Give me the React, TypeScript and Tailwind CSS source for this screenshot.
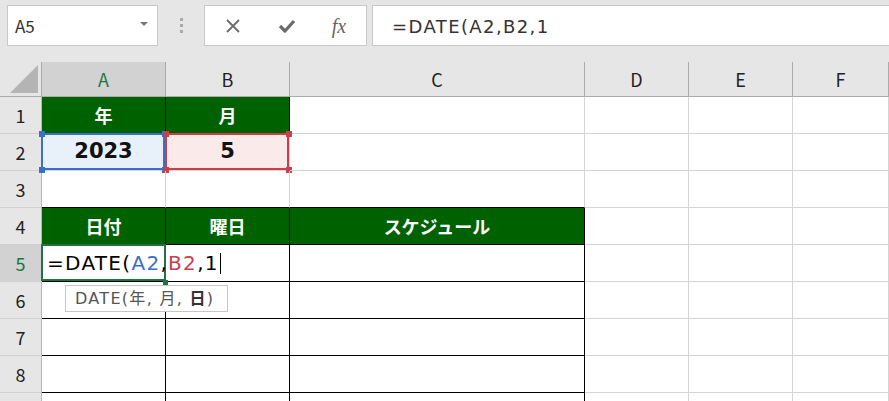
import type { ReactNode } from 'react';

const FONT = { fontFamily: '"Noto Sans CJK JP", "Noto Sans", sans-serif' };
const WIDE = { fontFamily: '"DejaVu Sans", "Noto Sans CJK JP", sans-serif' };

const COLS = ['A', 'B', 'C', 'D', 'E', 'F'];
const GRID = 'grid grid-cols-[42px_124px_124px_295px_104px_104px_1fr]';

function Cell({ className = '', children }: { className?: string; children?: ReactNode }) {
  return (
    <div className={`relative flex h-[37px] items-center justify-center border-b border-r border-[#d4d4d4] ${className}`}>
      {children}
    </div>
  );
}

function RowHead({ n, active }: { n?: number; active?: boolean }) {
  return (
    <div
      className={`flex h-[37px] items-center justify-center border-b border-r border-b-[#d0d0d0] border-r-[#b8b8b8] text-[18px] ${
        active ? 'bg-[#d2d2d2] text-[#217346]' : 'bg-[#e6e6e6] text-[#222]'
      }`}
    >
      {n}
    </div>
  );
}

function Handles({ color }: { color: string }) {
  const sq = `absolute h-[6px] w-[6px] ${color}`;
  return (
    <>
      <span className={`${sq} -left-[3px] -top-[3px]`} />
      <span className={`${sq} -right-[3px] -top-[3px]`} />
      <span className={`${sq} -bottom-[3px] -left-[3px]`} />
      <span className={`${sq} -bottom-[3px] -right-[3px]`} />
    </>
  );
}

const greenHead = 'bg-[#006100] text-white font-bold text-[18px] border-r-black border-b-black';
const tableCell = 'border-r-black border-b-black';

export default function App() {
  return (
    <div className="h-[401px] w-[889px] overflow-hidden bg-white" style={FONT}>
      {/* formula bar */}
      <div className="flex h-[62px] items-start bg-[#e6e6e6] pl-[7px] pt-[5px]">
        <div className="flex h-[41px] w-[151px] items-center justify-between border border-[#c8c8c8] bg-white pl-[7px] pr-[9px] text-[17px] text-[#333]">
          <span>A5</span>
          <span className="mb-[4px] h-0 w-0 border-x-[4px] border-t-[4px] border-x-transparent border-t-[#777]" />
        </div>
        <div className="flex h-[41px] w-[46px] flex-col items-center justify-center gap-[3px]">
          <span className="h-[3px] w-[3px] bg-[#aaa]" />
          <span className="h-[3px] w-[3px] bg-[#aaa]" />
          <span className="h-[3px] w-[3px] bg-[#aaa]" />
        </div>
        <div className="flex h-[41px] w-[163px] items-center border border-[#c8c8c8] bg-white">
          <div className="flex w-[56px] justify-center">
            <svg width="16" height="16" viewBox="0 0 16 16" fill="none" stroke="#6a6a6a" strokeWidth="1.8">
              <path d="M2 2 L14 14 M14 2 L2 14" />
            </svg>
          </div>
          <div className="flex w-[52px] justify-center">
            <svg width="18" height="16" viewBox="0 0 18 16" fill="none" stroke="#6a6a6a" strokeWidth="3.2" strokeLinejoin="round">
              <path d="M2 8 L7 13 L16 3" />
            </svg>
          </div>
          <div className="flex w-[52px] justify-center text-[20px] italic text-[#666]" style={{ fontFamily: '"Liberation Serif", serif' }}>
            fx
          </div>
        </div>
        <div
          className="ml-[5px] flex h-[41px] flex-1 items-center border border-r-0 border-[#c8c8c8] bg-white pl-[19px] pt-[2px] text-[18px] tracking-[1.4px] text-[#333]"
          style={WIDE}
        >
          =DATE(A2,B2,1
        </div>
      </div>

      {/* column headers */}
      <div className={`${GRID} h-[35px]`}>
        <div className="relative border-b border-r border-[#ababab] bg-[#e6e6e6]">
          <svg className="absolute bottom-[3px] right-[3px]" width="28" height="28" viewBox="0 0 28 28">
            <path d="M28 0 L28 28 L0 28 Z" fill="#b4b4b4" />
          </svg>
        </div>
        {COLS.map((c) => (
          <div
            key={c}
            className={`flex items-center justify-center border-b border-r border-[#ababab] text-[18px] ${
              c === 'A' ? 'bg-[#d2d2d2] text-[#217346]' : 'bg-[#e6e6e6] text-[#222]'
            }`}
          >
            {c}
          </div>
        ))}
      </div>

      {/* rows */}
      <div className={GRID}>
        {/* 1 */}
        <RowHead n={1} />
        <Cell className={greenHead}>年</Cell>
        <Cell className={greenHead}>月</Cell>
        <Cell />
        <Cell />
        <Cell />
        <Cell />

        {/* 2 */}
        <RowHead n={2} />
        <Cell className="bg-[#e8f0fa] text-[21px] font-bold text-[#111]">
          <span className="pointer-events-none absolute -left-px -top-px bottom-0 right-0 border-2 border-[#3a70c8]" />
          <Handles color="bg-[#3a70c8]" />
          <span style={WIDE}>2023</span>
        </Cell>
        <Cell className="bg-[#fbeaea] text-[21px] font-bold text-[#111]">
          <span className="pointer-events-none absolute -left-px -top-px bottom-0 right-0 border-2 border-[#c8404c]" />
          <Handles color="bg-[#c8404c]" />
          <span style={WIDE}>5</span>
        </Cell>
        <Cell />
        <Cell />
        <Cell />
        <Cell />

        {/* 3 */}
        <RowHead n={3} />
        <Cell className="border-b-black" />
        <Cell className="border-b-black" />
        <Cell className="border-b-black" />
        <Cell />
        <Cell />
        <Cell />

        {/* 4 */}
        <RowHead n={4} />
        <Cell className={greenHead}>日付</Cell>
        <Cell className={greenHead}>曜日</Cell>
        <Cell className={greenHead}>スケジュール</Cell>
        <Cell />
        <Cell />
        <Cell />

        {/* 5 */}
        <RowHead n={5} active />
        <Cell className={`${tableCell} justify-start`}>
          <span className="pointer-events-none absolute -left-px -top-px bottom-0 right-[-1px] border-2 border-[#217346]" />
          <span className="relative z-10 ml-[5px] whitespace-nowrap text-[20px] tracking-[1.3px] text-black" style={WIDE}>
            =DATE(<span className="text-[#3a70c8]">A2</span>,<span className="text-[#c8404c]">B2</span>,1
            <span className="ml-[1px] inline-block h-[21px] w-px translate-y-[4px] bg-black" />
          </span>
          <span className="absolute -bottom-[4px] -right-[3px] z-10 h-[5px] w-[5px] bg-[#217346]" />
          <div className="absolute left-[23px] top-[40px] z-20 flex h-[27px] w-[163px] items-center border border-[#c6c6c6] bg-white pl-[9px]">
            <span className="whitespace-pre text-[16px] tracking-[1.3px] text-[#555]" style={WIDE}>
              DATE(年, 月, <span className="font-bold text-[#333]">日</span>)
            </span>
          </div>
        </Cell>
        <Cell className={tableCell} />
        <Cell className={tableCell} />
        <Cell />
        <Cell />
        <Cell />

        {[6, 7, 8, 9].map((n) => (
          <div key={n} className="contents">
            <RowHead n={n < 9 ? n : undefined} />
            <Cell className={tableCell} />
            <Cell className={tableCell} />
            <Cell className={tableCell} />
            <Cell />
            <Cell />
            <Cell />
          </div>
        ))}
      </div>
    </div>
  );
}
